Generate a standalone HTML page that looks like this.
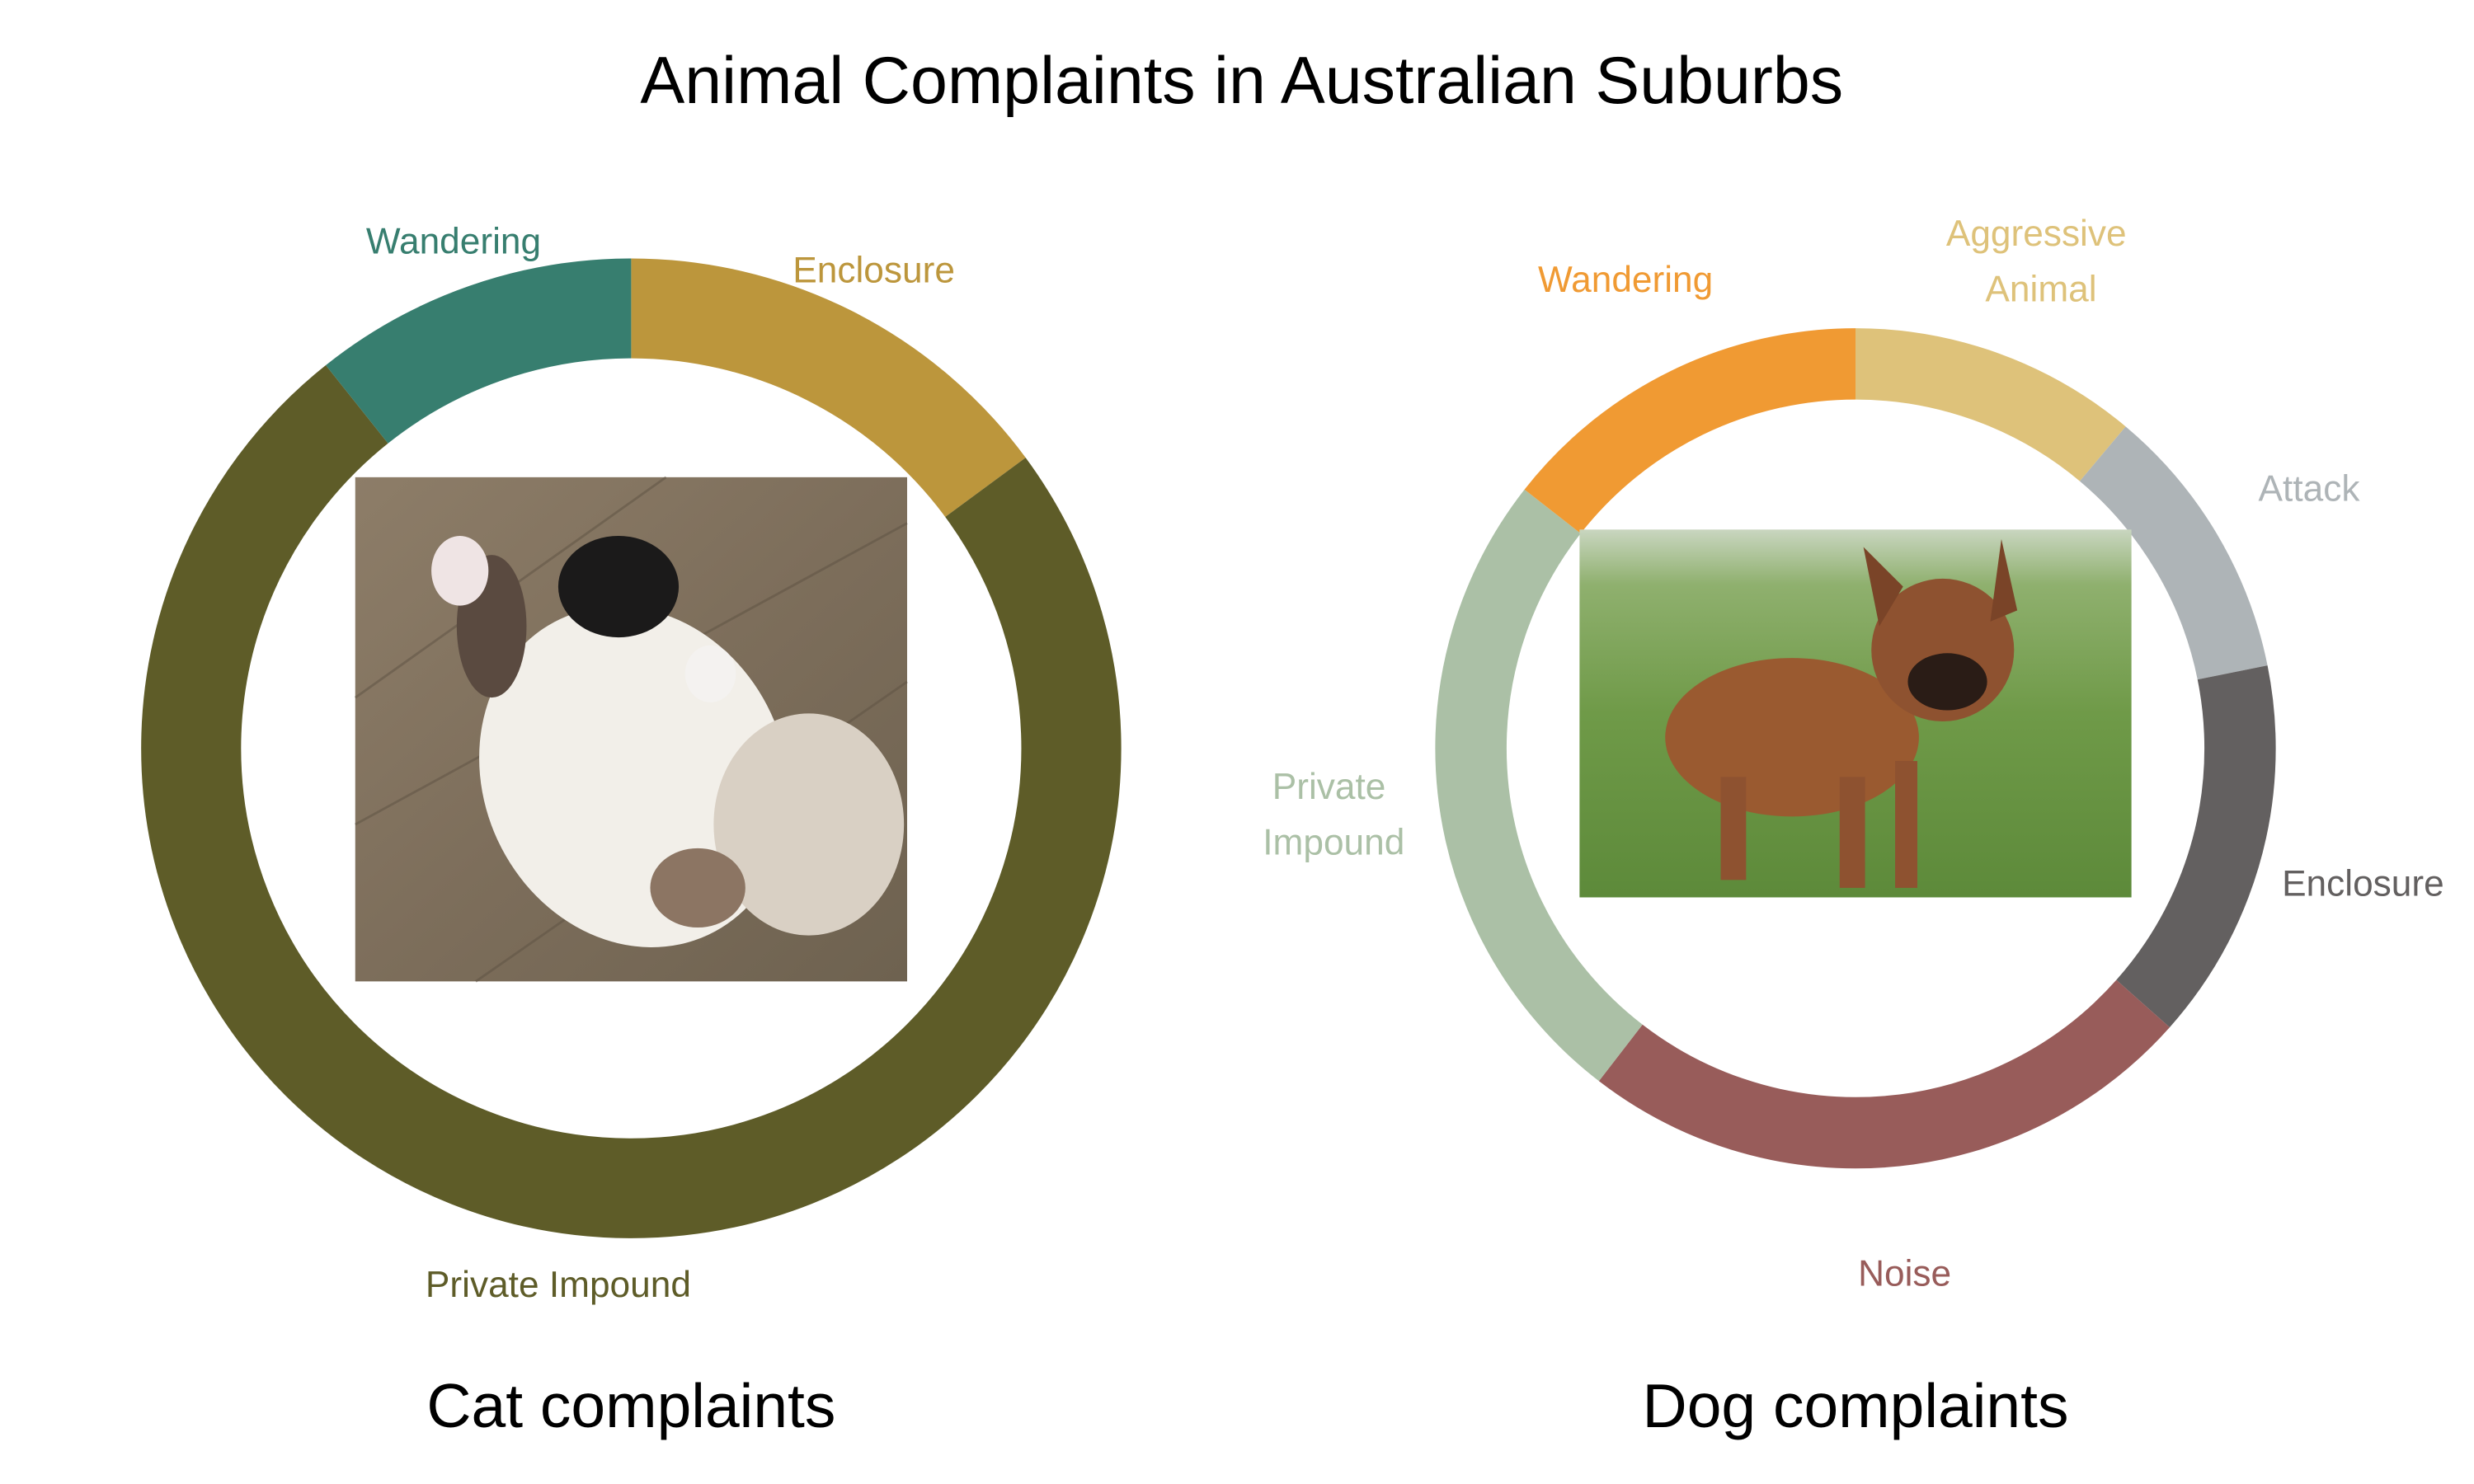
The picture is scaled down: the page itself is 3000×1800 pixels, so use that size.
<!DOCTYPE html>
<html><head><meta charset="utf-8"><style>
html,body{margin:0;padding:0;background:#fff;width:3000px;height:1800px;overflow:hidden}
svg{display:block}
text{font-family:"Liberation Sans",Arial,sans-serif}
</style></head><body>
<svg width="3000" height="1800" viewBox="0 0 1560 936" xmlns="http://www.w3.org/2000/svg">
<defs>
<linearGradient id="wood" x1="0" y1="0" x2="1" y2="1">
<stop offset="0" stop-color="#8d7d68"/><stop offset="0.5" stop-color="#7d6e5b"/><stop offset="1" stop-color="#6e6250"/></linearGradient>
<linearGradient id="grass" x1="0" y1="0" x2="0" y2="1">
<stop offset="0" stop-color="#c9d6c0"/><stop offset="0.15" stop-color="#8fb06e"/><stop offset="0.5" stop-color="#6f9a48"/><stop offset="1" stop-color="#5d8a3a"/></linearGradient>
</defs>
<text x="783" y="65" font-size="42" text-anchor="middle" fill="#000">Animal Complaints in Australian Suburbs</text>

<g transform="rotate(-90 398 472)" fill="none" stroke-width="63">
<circle cx="398" cy="472" r="277.5" stroke="#BC963C" stroke-dasharray="259.6 2000" stroke-dashoffset="0"/>
<circle cx="398" cy="472" r="277.5" stroke="#5E5C28" stroke-dasharray="1297.1 2000" stroke-dashoffset="-259.6"/>
<circle cx="398" cy="472" r="277.5" stroke="#377E6F" stroke-dasharray="186.9 2000" stroke-dashoffset="-1556.7"/>
</g>
<rect x="224" y="301" width="348" height="318" fill="url(#wood)"/>
<g stroke="#5e5243" stroke-width="1.5" opacity="0.5"><line x1="224" y1="440" x2="420" y2="301"/><line x1="224" y1="520" x2="572" y2="330"/><line x1="300" y1="619" x2="572" y2="430"/></g>
<ellipse cx="400" cy="490" rx="95" ry="110" fill="#f2efe9" transform="rotate(-25 400 490)"/>
<ellipse cx="510" cy="520" rx="60" ry="70" fill="#d9d0c4"/>
<ellipse cx="390" cy="370" rx="38" ry="32" fill="#1b1a1a"/>
<ellipse cx="310" cy="395" rx="22" ry="45" fill="#5a4a40"/>
<ellipse cx="290" cy="360" rx="18" ry="22" fill="#efe4e4"/>
<ellipse cx="448" cy="425" rx="16" ry="18" fill="#f4f2f0"/>
<ellipse cx="440" cy="560" rx="30" ry="25" fill="#8c7563"/>
<text x="286" y="160" font-size="23" text-anchor="middle" fill="#377E6F">Wandering</text>
<text x="551" y="178" font-size="23" text-anchor="middle" fill="#BC963C">Enclosure</text>
<text x="352" y="818" font-size="23" text-anchor="middle" fill="#5E5C28">Private Impound</text>
<text x="398" y="900" font-size="39" text-anchor="middle" fill="#000">Cat complaints</text>

<g transform="rotate(-90 1170 472)" fill="none" stroke-width="45">
<circle cx="1170" cy="472" r="242.5" stroke="#DEC27A" stroke-dasharray="169.3 2000" stroke-dashoffset="0"/>
<circle cx="1170" cy="472" r="242.5" stroke="#AEB4B7" stroke-dasharray="163.4 2000" stroke-dashoffset="-169.3"/>
<circle cx="1170" cy="472" r="242.5" stroke="#636060" stroke-dasharray="224.3 2000" stroke-dashoffset="-332.7"/>
<circle cx="1170" cy="472" r="242.5" stroke="#985C5A" stroke-dasharray="364 2000" stroke-dashoffset="-557"/>
<circle cx="1170" cy="472" r="242.5" stroke="#ABC0A6" stroke-dasharray="382.6 2000" stroke-dashoffset="-921"/>
<circle cx="1170" cy="472" r="242.5" stroke="#F09A33" stroke-dasharray="220.1 2000" stroke-dashoffset="-1303.6"/>
</g>
<rect x="996" y="334" width="348" height="232" fill="url(#grass)"/>
<ellipse cx="1130" cy="465" rx="80" ry="50" fill="#9a5a30"/>
<ellipse cx="1225" cy="410" rx="45" ry="45" fill="#8e5230"/>
<ellipse cx="1228" cy="430" rx="25" ry="18" fill="#2a1c16"/>
<polygon points="1185,395 1175,345 1200,370" fill="#7a4428"/>
<polygon points="1255,392 1262,340 1272,385" fill="#7a4428"/>
<rect x="1085" y="490" width="16" height="65" fill="#8e5230"/>
<rect x="1160" y="490" width="16" height="70" fill="#8e5230"/>
<rect x="1195" y="480" width="14" height="80" fill="#8e5230"/>
<text x="1025" y="184" font-size="23" text-anchor="middle" fill="#F09A33">Wandering</text>
<text x="1284" y="155" font-size="23" text-anchor="middle" fill="#DEC27A">Aggressive</text>
<text x="1287" y="190" font-size="23" text-anchor="middle" fill="#DEC27A">Animal</text>
<text x="1456" y="316" font-size="23" text-anchor="middle" fill="#AEB4B7">Attack</text>
<text x="1490" y="565" font-size="23" text-anchor="middle" fill="#636060">Enclosure</text>
<text x="838" y="504" font-size="23" text-anchor="middle" fill="#ABC0A6">Private</text>
<text x="841" y="539" font-size="23" text-anchor="middle" fill="#ABC0A6">Impound</text>
<text x="1201" y="811" font-size="23" text-anchor="middle" fill="#985C5A">Noise</text>
<text x="1170" y="900" font-size="39" text-anchor="middle" fill="#000">Dog complaints</text>
</svg>
</body></html>
